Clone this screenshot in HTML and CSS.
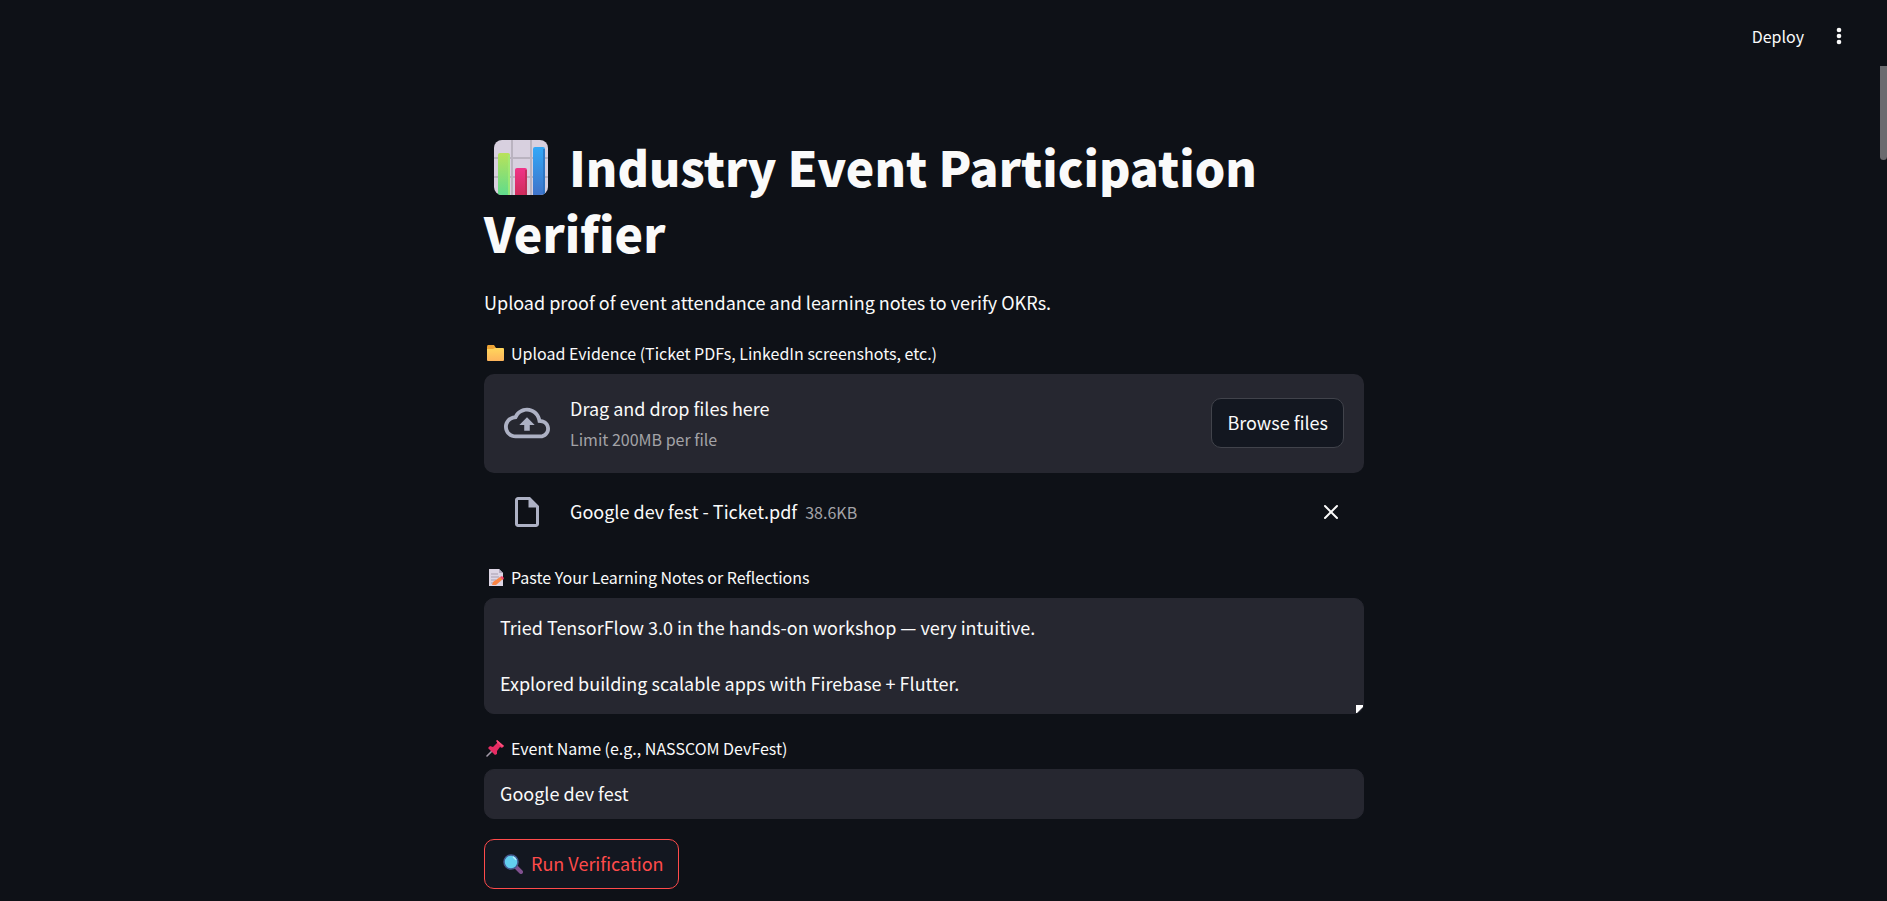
FILE: index.html
```html
<!DOCTYPE html>
<html lang="en">
<head>
<meta charset="utf-8">
<title>Industry Event Participation Verifier</title>
<link rel="stylesheet" href="styles.css">
</head>
<body>
<header class="toolbar">
  <button class="toolbar-button" type="button">Deploy</button>
  <button class="toolbar-button" type="button" aria-label="Main menu">
    <svg class="menu-icon" viewBox="0 0 6 18" fill="currentColor"><circle cx="3" cy="3" r="2.3"/><circle cx="3" cy="9" r="2.3"/><circle cx="3" cy="15" r="2.3"/></svg>
  </button>
</header>

<main class="page">
  <div class="column">
    <h1 class="title">
      <svg class="title-icon" viewBox="0 0 54 55" aria-hidden="true">
        <defs>
          <linearGradient id="green" x1="0" y1="0" x2="0" y2="1"><stop offset="0" stop-color="#b9e25a"/><stop offset="1" stop-color="#5fdc8c"/></linearGradient>
          <linearGradient id="pink" x1="0" y1="0" x2="0" y2="1"><stop offset="0" stop-color="#f03488"/><stop offset="1" stop-color="#cf2b5c"/></linearGradient>
          <linearGradient id="blue" x1="0" y1="0" x2="0" y2="1"><stop offset="0" stop-color="#33a8f7"/><stop offset="1" stop-color="#3f73c9"/></linearGradient>
          <clipPath id="tile"><rect width="54" height="55" rx="8"/></clipPath>
        </defs>
        <g clip-path="url(#tile)">
          <rect width="54" height="55" fill="#d8d0df"/>
          <path d="M18 0v55M37 0v55M0 18h54M0 37h54" stroke="#bab3c0" stroke-width="2"/>
          <path d="M4 55V15a2 2 0 0 1 2-2h8a2 2 0 0 1 2 2v40z" fill="url(#green)"/>
          <path d="M21 55V30a2 2 0 0 1 2-2h8a2 2 0 0 1 2 2v25z" fill="url(#pink)"/>
          <path d="M39 55V9a2 2 0 0 1 2-2h8a2 2 0 0 1 2 2v46z" fill="url(#blue)"/>
          <path d="M15 15v40" stroke="#a2ed74" stroke-width="1.5"/>
          <path d="M32 30v25" stroke="#b92f55" stroke-width="1.5"/>
          <path d="M50 9v46" stroke="#2c70bd" stroke-width="1.5"/>
        </g>
      </svg>
      Industry Event Participation Verifier
    </h1>
    <p class="intro">Upload proof of event attendance and learning notes to verify OKRs.</p>

    <section class="field">
      <label class="label" for="evidence">
        <svg class="label-icon" viewBox="0 0 20 20" aria-hidden="true"><defs><linearGradient id="folder" x1="0" y1="0" x2="0" y2="1"><stop offset="0" stop-color="#ffd65c"/><stop offset="1" stop-color="#fdb45c"/></linearGradient></defs><path d="M3 4q0-2 1-2h6l2 3v3H3z" fill="#eda335"/><path d="M3 6h6l2-1h8q1 0 1 1v11q0 1-1 1H4q-1 0-1-1z" fill="url(#folder)"/></svg>
        Upload Evidence (Ticket PDFs, LinkedIn screenshots, etc.)
      </label>
      <div class="dropzone">
        <svg class="cloud-icon" viewBox="0 0 24 24" fill="currentColor" aria-hidden="true"><path d="M19.35 10.04C18.67 6.59 15.64 4 12 4 9.11 4 6.6 5.64 5.35 8.04 2.34 8.36 0 10.91 0 14c0 3.31 2.69 6 6 6h13c2.76 0 5-2.24 5-5 0-2.64-2.05-4.78-4.65-4.96zM19 18H6c-2.21 0-4-1.79-4-4 0-2.05 1.53-3.76 3.56-3.97l1.07-.11.5-.95C8.08 7.14 9.94 6 12 6c2.62 0 4.88 1.86 5.39 4.43l.3 1.5 1.53.11c1.56.1 2.78 1.41 2.78 2.96 0 1.65-1.35 3-3 3zM8 13h2.55v3h2.9v-3H16l-4-4z"/></svg>
        <div class="dropzone-text">
          <span class="dropzone-title">Drag and drop files here</span>
          <span class="muted">Limit 200MB per file</span>
        </div>
        <button class="button" id="evidence" type="button">Browse files</button>
      </div>
      <div class="file">
        <svg class="file-icon" viewBox="0 0 24 24" fill="currentColor" aria-hidden="true"><path d="M14 2H6c-1.1 0-1.99.9-1.99 2L4 20c0 1.1.89 2 1.99 2H18c1.1 0 2-.9 2-2V8l-6-6zM6 20V4h7v5h5v11H6z"/></svg>
        <div class="file-text">
          <span class="file-name">Google dev fest - Ticket.pdf</span>
          <span class="muted">38.6KB</span>
        </div>
        <button class="remove" type="button" aria-label="Remove file">
          <svg class="remove-icon" viewBox="0 0 16 16" fill="none" stroke="currentColor" stroke-width="2" stroke-linecap="round"><path d="M2 2l12 12M14 2L2 14"/></svg>
        </button>
      </div>
    </section>

    <section class="field">
      <label class="label" for="notes">
        <svg class="label-icon" viewBox="0 0 20 20" aria-hidden="true"><path d="M5 2h10l4 4v13H5z" fill="#ddd5e4"/><path d="M15 2l4 4h-4z" fill="#b3a9be"/><path d="M7 7h7M7 10h8M7 13h5M7 16h2" stroke="#a79daf" stroke-width="1"/><path d="M8 18l1-3 7-5 3 2-7 6z" fill="#fb8544"/><path d="M16 10l2-1 2 2-1 2z" fill="#f4476c"/></svg>
        Paste Your Learning Notes or Reflections
      </label>
      <div class="textarea-wrap">
        <textarea class="input textarea" id="notes" rows="3">Tried TensorFlow 3.0 in the hands-on workshop — very intuitive.

Explored building scalable apps with Firebase + Flutter.</textarea>
        <svg class="grip" viewBox="0 0 7 8" aria-hidden="true"><path d="M0 0h7v2L1 8H0z" fill="#fff"/></svg>
      </div>
    </section>

    <section class="field">
      <label class="label" for="event">
        <svg class="label-icon" viewBox="0 0 20 20" aria-hidden="true"><path d="M3 18l6-6" stroke="#a49aa9" stroke-width="1.6" stroke-linecap="round"/><path d="M13 2l7 6-2 2-2-1-3 4v3l-2 1-7-7 2-2 3 1 4-4z" fill="#e62c63"/><path d="M13 2l7 6-2 1-6-6z" fill="#ff4f7c"/></svg>
        Event Name (e.g., NASSCOM DevFest)
      </label>
      <input class="input" id="event" type="text" value="Google dev fest">
    </section>

    <button class="button button-run" type="button">
      <svg class="run-icon" viewBox="0 0 20 20" aria-hidden="true"><path d="M13 13l5 5" stroke="#80508f" stroke-width="4" stroke-linecap="round"/><circle cx="8" cy="8" r="7" fill="#62cff0" stroke="#455a91" stroke-width="1.5"/><path d="M10 3q2 1 3 3" stroke="#b5efff" stroke-width="1.5" fill="none"/></svg>
      Run Verification
    </button>
  </div>
</main>
<div class="scroll-thumb"></div>
</body>
</html>
```
FILE: styles.css
```css
* {
  box-sizing: border-box;
}

html {
  height: 100%;
  overflow: hidden;
}

body {
  margin: 0;
  background: #0e1117;
  color: #fafafa;
  font-family: "Noto Sans CJK SC", "Noto Sans", sans-serif;
  font-size: 18px;
}

button,
input,
textarea {
  font: inherit;
  color: inherit;
}

svg {
  display: block;
  flex: none;
}

.toolbar {
  display: flex;
  align-items: center;
  justify-content: flex-end;
  gap: 32px;
  height: 72px;
  padding-right: 45px;
}

.toolbar-button {
  padding: 0;
  border: 0;
  background: none;
  font-size: 16px;
  line-height: 28px;
}

.menu-icon {
  width: 6px;
  height: 18px;
}

.page {
  padding: 61px 39px 12px 0;
}

.column {
  display: flex;
  flex-direction: column;
  align-items: stretch;
  gap: 20px;
  max-width: 880px;
  margin: 0 auto;
}

.title {
  margin: 0;
  padding-bottom: 1px;
  font-size: 48px;
  font-weight: 900;
  line-height: 66px;
}

.title-icon {
  display: inline-block;
  width: 54px;
  height: 55px;
  margin: 0 10px;
  vertical-align: -8px;
}

.intro {
  margin: 0;
  line-height: 33px;
}

.field {
  display: flex;
  flex-direction: column;
}

.label {
  display: flex;
  align-items: center;
  gap: 7px;
  margin-bottom: 7px;
  font-size: 16px;
  line-height: 28px;
}

.label-icon {
  width: 20px;
  height: 20px;
}

.dropzone {
  display: flex;
  align-items: center;
  gap: 20px;
  height: 99px;
  padding: 0 20px 1px;
  border-radius: 10px;
  background: #262730;
}

.cloud-icon {
  width: 46px;
  height: 46px;
  color: #adb1c4;
}

.dropzone-text {
  display: flex;
  flex: 1;
  flex-direction: column;
}

.dropzone-title {
  line-height: 32px;
}

.muted {
  color: #a3a3a7;
  font-size: 16px;
  line-height: 30px;
}

.button {
  height: 50px;
  padding: 0 15px 1px;
  border: 1px solid #41434b;
  border-radius: 10px;
  background: #131720;
  line-height: 25px;
}

.button-run {
  display: flex;
  align-items: center;
  align-self: flex-start;
  gap: 8px;
  padding: 0 14px 1px 18px;
  border-color: #ff4b4b;
  color: #ff4b4b;
}

.run-icon {
  width: 20px;
  height: 20px;
}

.file {
  display: flex;
  align-items: center;
  gap: 25px;
  height: 70px;
  padding: 8px 25px 0;
}

.file-icon {
  width: 36px;
  height: 36px;
  color: #adb1c4;
}

.file-text {
  display: flex;
  flex: 1;
  align-items: baseline;
  gap: 8px;
  padding-bottom: 2px;
  line-height: 30px;
}

.remove {
  padding: 0;
  border: 0;
  background: none;
}

.remove-icon {
  width: 16px;
  height: 16px;
}

.input {
  display: block;
  width: 100%;
  height: 50px;
  padding: 0 15px 2px;
  border: 1px solid #262730;
  border-radius: 10px;
  outline: 0;
  background: #262730;
}

.textarea-wrap {
  position: relative;
}

.textarea {
  height: 116px;
  padding: 14px 15px;
  line-height: 28px;
  resize: none;
  overflow: hidden;
}

.grip {
  position: absolute;
  right: 1px;
  bottom: 1px;
  width: 7px;
  height: 8px;
}

.scroll-thumb {
  position: fixed;
  top: 66px;
  right: 0;
  width: 7px;
  height: 94px;
  border-radius: 0 0 4px 4px;
  background: #6b6b6f;
}
```
